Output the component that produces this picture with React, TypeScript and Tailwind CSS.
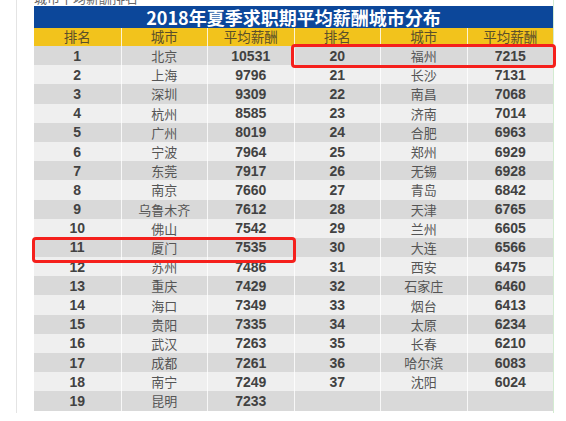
const left = [
  [1, "北京", 10531],
  [2, "上海", 9796],
  [3, "深圳", 9309],
  [4, "杭州", 8585],
  [5, "广州", 8019],
  [6, "宁波", 7964],
  [7, "东莞", 7917],
  [8, "南京", 7660],
  [9, "乌鲁木齐", 7612],
  [10, "佛山", 7542],
  [11, "厦门", 7535],
  [12, "苏州", 7486],
  [13, "重庆", 7429],
  [14, "海口", 7349],
  [15, "贵阳", 7335],
  [16, "武汉", 7263],
  [17, "成都", 7261],
  [18, "南宁", 7249],
  [19, "昆明", 7233],
] as const;

const right = [
  [20, "福州", 7215],
  [21, "长沙", 7131],
  [22, "南昌", 7068],
  [23, "济南", 7014],
  [24, "合肥", 6963],
  [25, "郑州", 6929],
  [26, "无锡", 6928],
  [27, "青岛", 6842],
  [28, "天津", 6765],
  [29, "兰州", 6605],
  [30, "大连", 6566],
  [31, "西安", 6475],
  [32, "石家庄", 6460],
  [33, "烟台", 6413],
  [34, "太原", 6234],
  [35, "长春", 6210],
  [36, "哈尔滨", 6083],
  [37, "沈阳", 6024],
] as const;

const num = "font-['Liberation_Sans',sans-serif] font-bold text-[14px] text-[#424242]";
const city = "font-['Noto_Sans_CJK_SC',sans-serif] text-[13px] text-[#555]";

function Cell({ children, first, className }: { children?: React.ReactNode; first?: boolean; className: string }) {
  return (
    <div className={`flex items-center justify-center leading-none ${first ? "" : "border-l border-white/80"} ${className}`}>
      {children}
    </div>
  );
}

export default function App() {
  const headers = ["排名", "城市", "平均薪酬", "排名", "城市", "平均薪酬"];
  return (
    <div className="w-[566px] h-[421px] bg-white overflow-hidden">
      <div className="relative ml-4 w-[538px] h-[413px] border-l border-[#e4e4e4] border-r border-r-[#d3ebd1] pl-[17px]">
        {/* line of text above, cut off by the screenshot */}
        <div className="h-[6px] overflow-hidden relative">
          <span className="absolute left-0 bottom-[2px] font-['Noto_Sans_CJK_SC',sans-serif] text-[13px] leading-[13px] text-[#666]">
            城市平均薪酬排名
          </span>
        </div>

        <div className="w-[519px]">
          <div className="h-[22px] bg-[#0c479a] flex items-center justify-center text-white font-bold text-[18px] font-['Noto_Sans_CJK_SC',sans-serif] leading-none">
            2018年夏季求职期平均薪酬城市分布
          </div>
          <div className="grid grid-cols-6 h-[18px] bg-[#f2c31c]">
            {headers.map((h, i) => (
              <Cell key={i} first={i === 0} className="font-['Noto_Sans_CJK_SC',sans-serif] text-[13.5px] text-[#5b4f2a] border-[#f6d65c]">
                {h}
              </Cell>
            ))}
          </div>
          {left.map((l, i) => {
            const r = right[i];
            return (
              <div key={i} className={`grid grid-cols-6 h-[19.2px] ${i % 2 === 0 ? "bg-[#d9d9d9]" : "bg-[#efefef]"}`}>
                <Cell first className={num}>{l[0]}</Cell>
                <Cell className={city}>{l[1]}</Cell>
                <Cell className={num}>{l[2]}</Cell>
                <Cell className={num}>{r ? r[0] : ""}</Cell>
                <Cell className={city}>{r ? r[1] : ""}</Cell>
                <Cell className={num}>{r ? r[2] : ""}</Cell>
              </div>
            );
          })}
        </div>

        {/* highlight boxes */}
        <div className="absolute left-[274px] top-[44px] w-[265px] h-[24px] border-[3px] border-[#f5201c] rounded-[4px]" />
        <div className="absolute left-[15px] top-[237px] w-[264px] h-[26px] border-[3px] border-[#f5201c] rounded-[4px]" />
      </div>
    </div>
  );
}
